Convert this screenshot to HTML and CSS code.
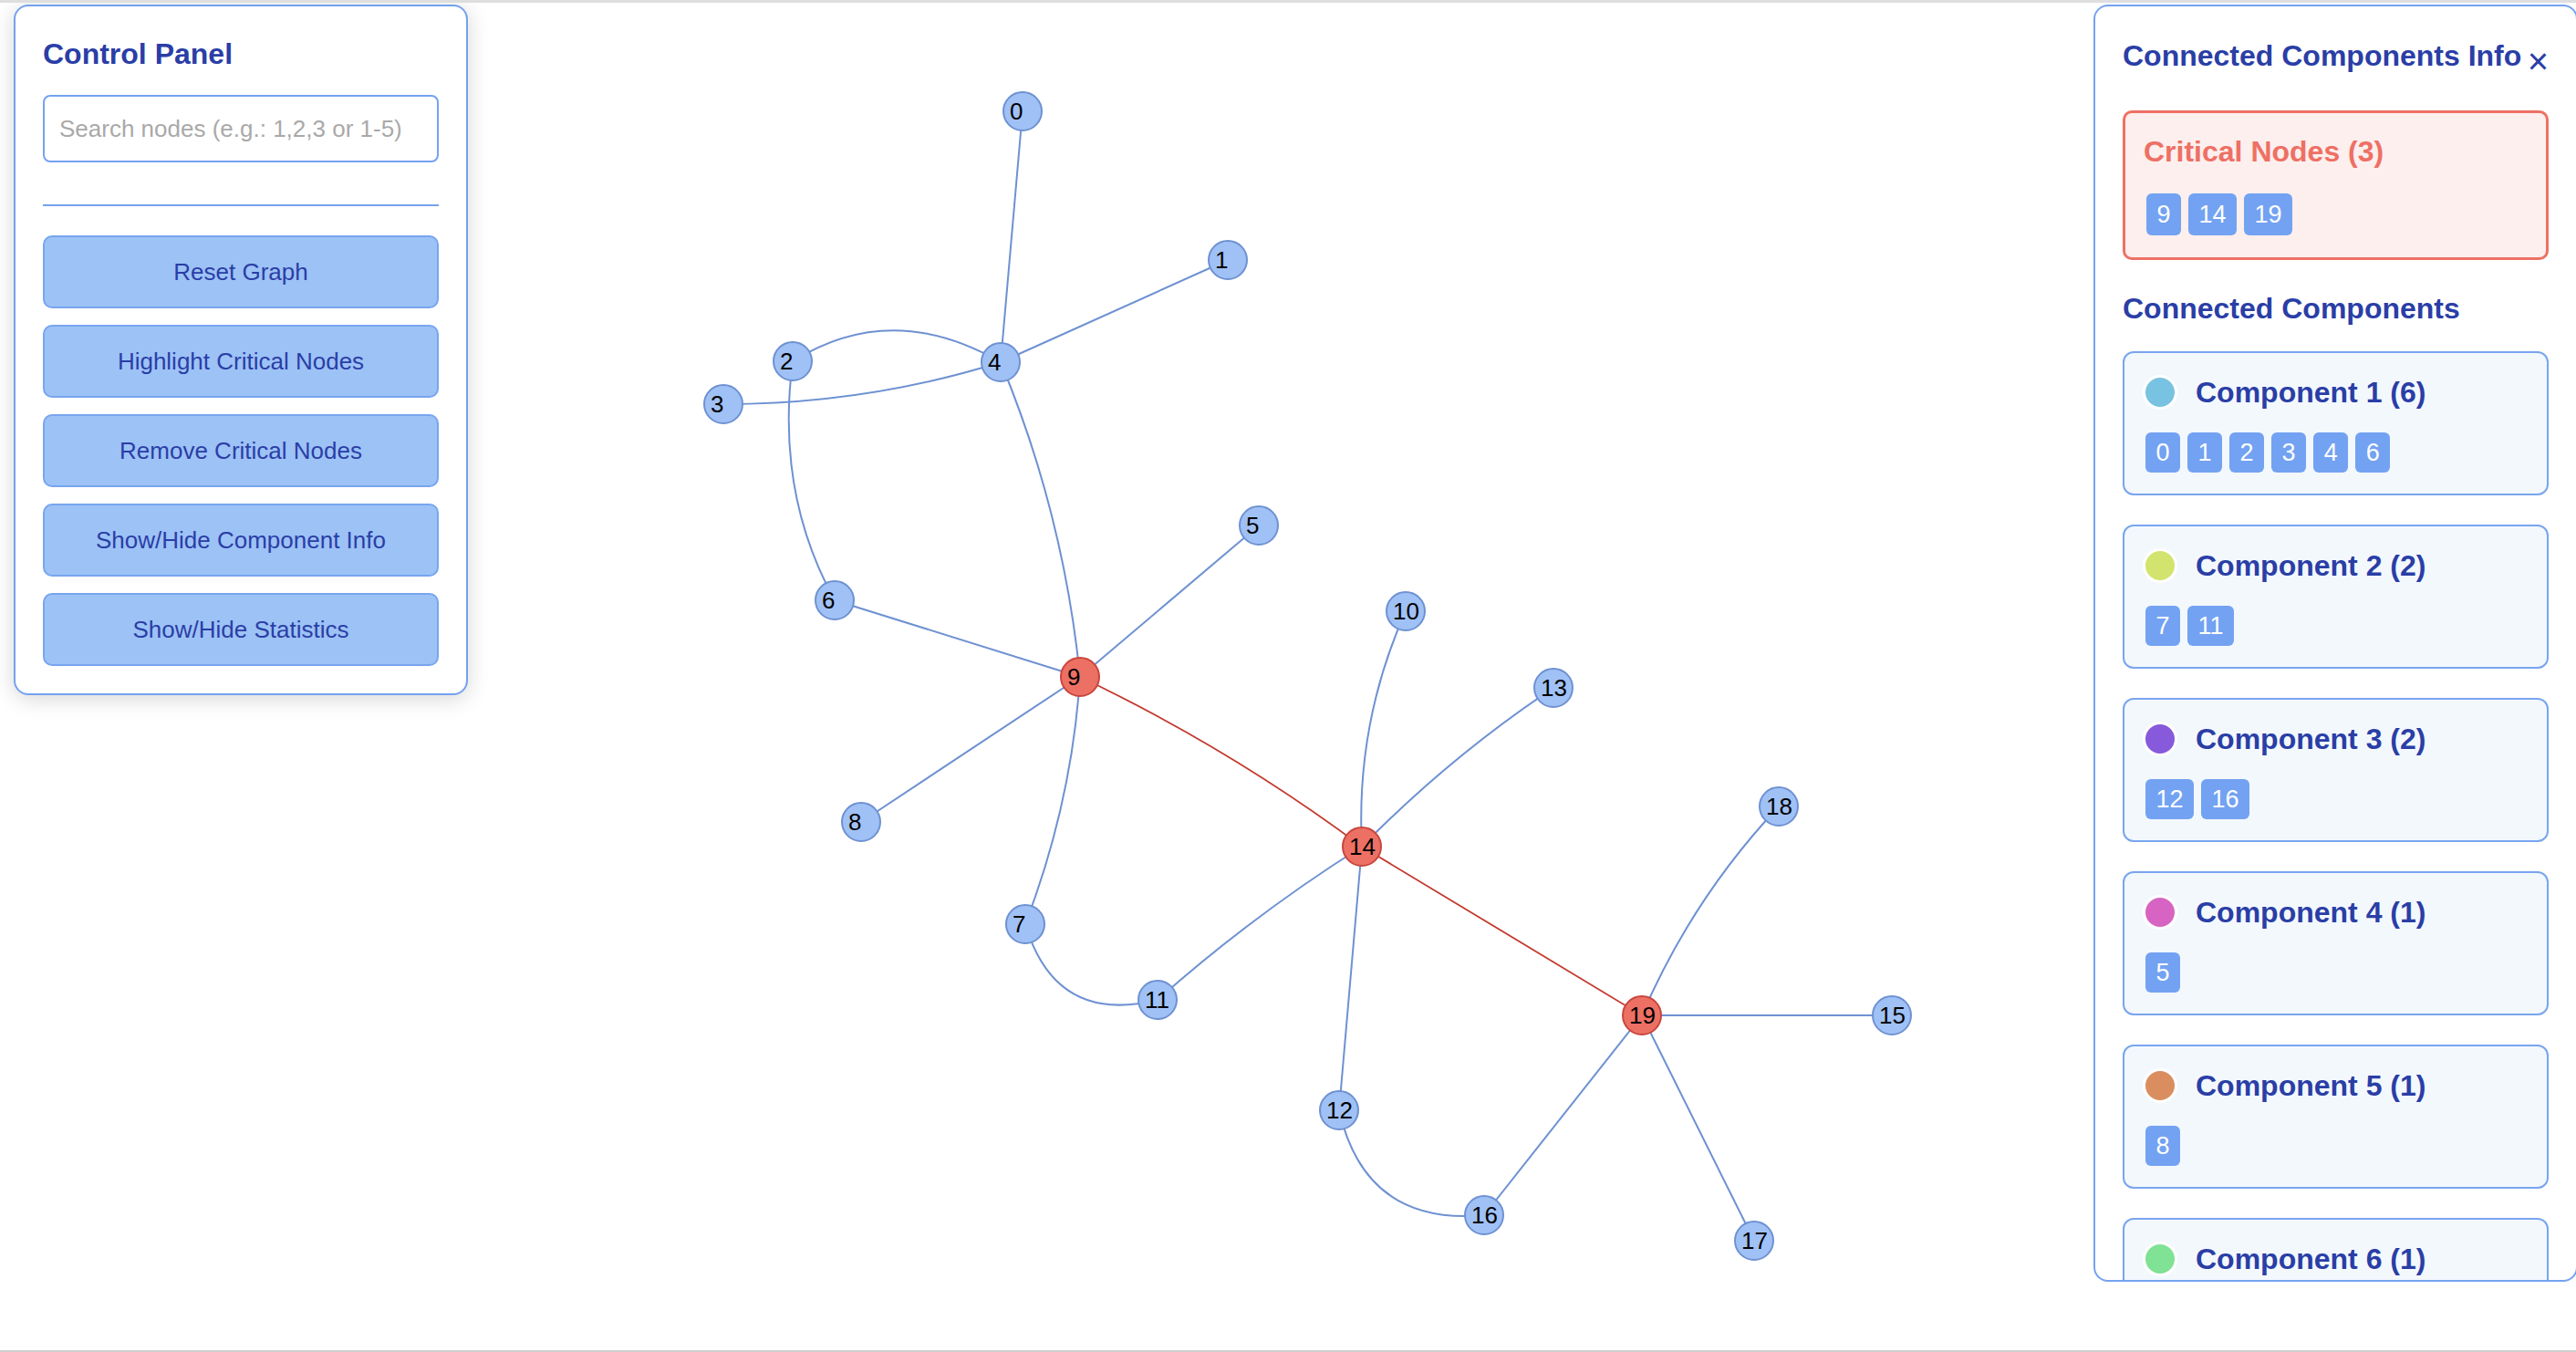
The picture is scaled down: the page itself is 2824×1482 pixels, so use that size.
FILE: index.html
```html
<!DOCTYPE html>
<html lang="en">
<head>
<meta charset="utf-8">
<title>Connected Components</title>
<link rel="stylesheet" href="styles.css">
</head>
<body>
<div class="app">
  <svg class="graph" viewBox="0 3 2824 1477" width="2824" height="1477" xmlns="http://www.w3.org/2000/svg">
    <g class="edges">
      <path class="edge" d="M1121,122 L1097,397"/>
      <path class="edge" d="M1346,285 L1097,397"/>
      <path class="edge" d="M869,396 Q978,328 1097,397"/>
      <path class="edge" d="M793,443 Q950,443 1097,397"/>
      <path class="edge" d="M869,396 Q850,540 915,658"/>
      <path class="edge" d="M1097,397 Q1166,563 1184,742"/>
      <path class="edge" d="M915,658 L1184,742"/>
      <path class="edge" d="M1380,576 L1184,742"/>
      <path class="edge" d="M944,901 L1184,742"/>
      <path class="edge" d="M1184,742 Q1175,880 1124,1013"/>
      <path class="edge" d="M1124,1013 Q1157,1124 1269,1096"/>
      <path class="edge" d="M1541,670 Q1486,793 1493,928"/>
      <path class="edge" d="M1703,754 Q1589,830 1493,928"/>
      <path class="edge" d="M1269,1096 Q1374,1003 1493,928"/>
      <path class="edge" d="M1493,928 L1468,1217"/>
      <path class="edge" d="M1468,1217 Q1497,1344 1627,1332"/>
      <path class="edge" d="M1627,1332 L1800,1113"/>
      <path class="edge" d="M1950,884 Q1855,985 1800,1113"/>
      <path class="edge" d="M2074,1113 L1800,1113"/>
      <path class="edge" d="M1923,1360 L1800,1113"/>
      <path class="edge critical" d="M1184,742 Q1348,820 1493,928"/>
      <path class="edge critical" d="M1493,928 L1800,1113"/>
    </g>
    <g class="nodes">
      <g class="node"><circle cx="1121" cy="122" r="21"/><text x="1107" y="131">0</text></g>
      <g class="node"><circle cx="1346" cy="285" r="21"/><text x="1332" y="294">1</text></g>
      <g class="node"><circle cx="869" cy="396" r="21"/><text x="855" y="405">2</text></g>
      <g class="node"><circle cx="793" cy="443" r="21"/><text x="779" y="452">3</text></g>
      <g class="node"><circle cx="1097" cy="397" r="21"/><text x="1083" y="406">4</text></g>
      <g class="node"><circle cx="1380" cy="576" r="21"/><text x="1366" y="585">5</text></g>
      <g class="node"><circle cx="915" cy="658" r="21"/><text x="901" y="667">6</text></g>
      <g class="node"><circle cx="1124" cy="1013" r="21"/><text x="1110" y="1022">7</text></g>
      <g class="node"><circle cx="944" cy="901" r="21"/><text x="930" y="910">8</text></g>
      <g class="node critical"><circle cx="1184" cy="742" r="21"/><text x="1170" y="751">9</text></g>
      <g class="node"><circle cx="1541" cy="670" r="21"/><text x="1527" y="679">10</text></g>
      <g class="node"><circle cx="1269" cy="1096" r="21"/><text x="1255" y="1105">11</text></g>
      <g class="node"><circle cx="1468" cy="1217" r="21"/><text x="1454" y="1226">12</text></g>
      <g class="node"><circle cx="1703" cy="754" r="21"/><text x="1689" y="763">13</text></g>
      <g class="node critical"><circle cx="1493" cy="928" r="21"/><text x="1479" y="937">14</text></g>
      <g class="node"><circle cx="2074" cy="1113" r="21"/><text x="2060" y="1122">15</text></g>
      <g class="node"><circle cx="1627" cy="1332" r="21"/><text x="1613" y="1341">16</text></g>
      <g class="node"><circle cx="1923" cy="1360" r="21"/><text x="1909" y="1369">17</text></g>
      <g class="node"><circle cx="1950" cy="884" r="21"/><text x="1936" y="893">18</text></g>
      <g class="node critical"><circle cx="1800" cy="1113" r="21"/><text x="1786" y="1122">19</text></g>
    </g>
  </svg>

  <aside class="control-panel">
    <h2 class="panel-title">Control Panel</h2>
    <input class="search" type="text" placeholder="Search nodes (e.g.: 1,2,3 or 1-5)">
    <hr class="divider">
    <div class="actions">
      <button class="btn">Reset Graph</button>
      <button class="btn">Highlight Critical Nodes</button>
      <button class="btn">Remove Critical Nodes</button>
      <button class="btn">Show/Hide Component Info</button>
      <button class="btn">Show/Hide Statistics</button>
    </div>
  </aside>

  <aside class="info-panel">
    <div class="info-header">
      <h2 class="panel-title">Connected Components Info</h2>
      <button class="close">×</button>
    </div>
    <div class="critical-box">
      <h3 class="critical-title">Critical Nodes (3)</h3>
      <div class="badges">
        <span class="badge lg">9</span><span class="badge lg">14</span><span class="badge lg">19</span>
      </div>
    </div>
    <h3 class="section-title">Connected Components</h3>
    <div class="components">
      <div class="card">
        <div class="card-head"><span class="dot c1"></span><span class="card-title">Component 1 (6)</span></div>
        <div class="badges"><span class="badge">0</span><span class="badge">1</span><span class="badge">2</span><span class="badge">3</span><span class="badge">4</span><span class="badge">6</span></div>
      </div>
      <div class="card">
        <div class="card-head"><span class="dot c2"></span><span class="card-title">Component 2 (2)</span></div>
        <div class="badges"><span class="badge">7</span><span class="badge">11</span></div>
      </div>
      <div class="card">
        <div class="card-head"><span class="dot c3"></span><span class="card-title">Component 3 (2)</span></div>
        <div class="badges"><span class="badge">12</span><span class="badge">16</span></div>
      </div>
      <div class="card">
        <div class="card-head"><span class="dot c4"></span><span class="card-title">Component 4 (1)</span></div>
        <div class="badges"><span class="badge">5</span></div>
      </div>
      <div class="card">
        <div class="card-head"><span class="dot c5"></span><span class="card-title">Component 5 (1)</span></div>
        <div class="badges"><span class="badge">8</span></div>
      </div>
      <div class="card">
        <div class="card-head"><span class="dot c6"></span><span class="card-title">Component 6 (1)</span></div>
      </div>
    </div>
  </aside>
</div>
</body>
</html>
```
FILE: styles.css
```css
* { box-sizing: border-box; }

html, body {
  margin: 0;
  padding: 0;
  background: #ffffff;
}

body {
  font-family: "Liberation Sans", Arial, Helvetica, sans-serif;
  overflow: hidden;
}

.app {
  position: relative;
  width: 2824px;
  height: 1482px;
  border-top: 3px solid #dedede;
  border-bottom: 2px solid #cfcfcf;
  overflow: hidden;
}

.graph {
  display: block;
  width: 2824px;
  height: 1477px;
}

.edge {
  fill: none;
  stroke: #6e91d2;
  stroke-width: 2;
}

.edge.critical {
  stroke: #c23a2e;
  stroke-width: 1.8;
}

.node circle {
  fill: #a0c1f5;
  stroke: #6e91d2;
  stroke-width: 2;
}

.node.critical circle {
  fill: #ed7064;
  stroke: #c8463c;
}

.node text {
  font-family: "Liberation Sans", Arial, Helvetica, sans-serif;
  font-size: 26px;
  fill: #000000;
}

/* Control panel */
.control-panel {
  position: absolute;
  left: 15px;
  top: 2px;
  width: 498px;
  border: 2px solid #74a2ef;
  border-radius: 16px;
  background: #ffffff;
  padding: 34px 30px 30px;
  box-shadow: 0 4px 24px rgba(0, 0, 0, 0.16);
}

.panel-title {
  margin: 0;
  font-size: 32px;
  line-height: 37px;
  font-weight: 700;
  color: #2a3ea6;
}

.search {
  display: block;
  width: 100%;
  height: 74px;
  margin-top: 26px;
  border: 2px solid #74a2ef;
  border-radius: 8px;
  padding: 0 16px;
  font-family: "Liberation Sans", Arial, Helvetica, sans-serif;
  font-size: 26px;
  color: #333333;
  background: #ffffff;
  outline: none;
}

.search::placeholder {
  color: #a9a9a9;
}

.divider {
  border: none;
  height: 2px;
  background: #74a2ef;
  margin: 46px 0 0;
}

.actions {
  display: flex;
  flex-direction: column;
  gap: 18px;
  margin-top: 32px;
}

.btn {
  height: 80px;
  border: 2px solid #78a5ef;
  border-radius: 10px;
  background: #9dc2f6;
  color: #2a3ea6;
  font-family: "Liberation Sans", Arial, Helvetica, sans-serif;
  font-size: 26px;
  padding: 0;
}

/* Info panel */
.info-panel {
  position: absolute;
  top: 2px;
  right: -2px;
  width: 531px;
  height: 1400px;
  border: 2px solid #74a2ef;
  border-radius: 16px;
  background: #ffffff;
  padding: 36px 30px 30px;
  overflow: hidden;
}

.info-header {
  display: flex;
  justify-content: space-between;
  align-items: flex-start;
  height: 37px;
}

.close {
  display: block;
  height: 37px;
  border: none;
  background: none;
  padding: 0;
  font-family: "Liberation Sans", Arial, Helvetica, sans-serif;
  font-size: 40px;
  line-height: 48px;
  color: #2a3ea6;
  overflow: visible;
}

.critical-box {
  margin-top: 41px;
  border: 3px solid #ee7064;
  border-radius: 10px;
  background: #fcefee;
  padding: 24px 20px 24px;
}

.critical-title {
  margin: 0;
  font-size: 32px;
  line-height: 37px;
  font-weight: 700;
  color: #ee7064;
}

.badges {
  display: flex;
  gap: 8px;
  padding-left: 3px;
  margin-top: 25px;
}

.critical-box .badges {
  margin-top: 27px;
}

.badge {
  display: block;
  height: 44px;
  line-height: 44px;
  padding: 0 11.5px;
  border-radius: 6px;
  background: #73a2f2;
  color: #ffffff;
  font-size: 27px;
}

.badge.lg {
  height: 46px;
  line-height: 46px;
}

.section-title {
  margin: 35px 0 0;
  font-size: 32px;
  line-height: 37px;
  font-weight: 700;
  color: #2a3ea6;
}

.components {
  display: flex;
  flex-direction: column;
  gap: 32px;
  margin-top: 28px;
}

.card {
  border: 2px solid #78a5ef;
  border-radius: 12px;
  background: #f3f8fd;
  padding: 24px 20px 23px;
}

.card-head {
  display: flex;
  align-items: center;
  gap: 20px;
  height: 38px;
}

.dot {
  flex: none;
  width: 38px;
  height: 38px;
  border-radius: 50%;
  border: 3px solid #ffffff;
}

.c1 { background: #78c3e1; }
.c2 { background: #d2e46e; }
.c3 { background: #875adc; }
.c4 { background: #d764c3; }
.c5 { background: #da8e60; }
.c6 { background: #80e294; }

.card-title {
  font-size: 32px;
  line-height: 37px;
  font-weight: 700;
  color: #2a3ea6;
}
```
